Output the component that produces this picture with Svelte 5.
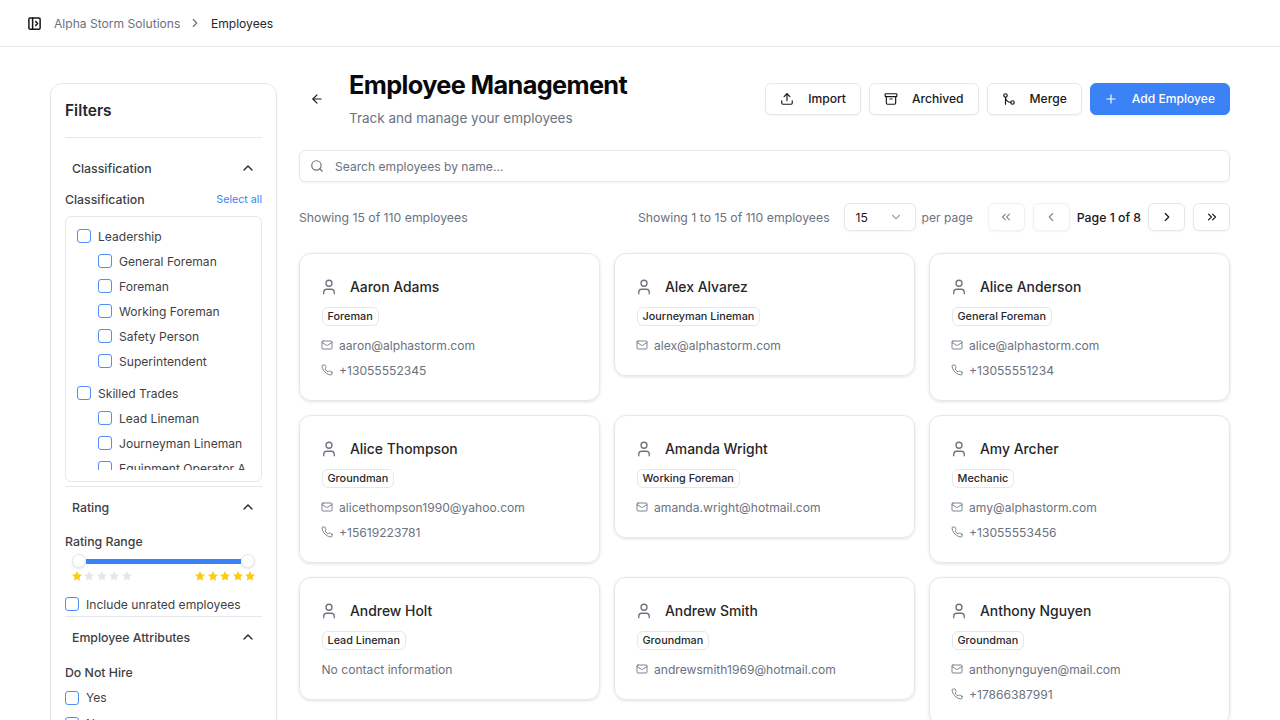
<script>
  const icons = {
    panel: '<rect width="18" height="18" x="3" y="3" rx="2"/><path d="M9 3v18"/><path d="m14 9 3 3-3 3"/>',
    chevronRight: '<path d="m9 18 6-6-6-6"/>',
    chevronLeft: '<path d="m15 18-6-6 6-6"/>',
    chevronUp: '<path d="m18 15-6-6-6 6"/>',
    chevronDown: '<path d="m6 9 6 6 6-6"/>',
    first: '<path d="m11 17-5-5 5-5"/><path d="m18 17-5-5 5-5"/>',
    last: '<path d="m6 17 5-5-5-5"/><path d="m13 17 5-5-5-5"/>',
    back: '<path d="m12 19-7-7 7-7"/><path d="M19 12H5"/>',
    upload: '<path d="M21 15v4a2 2 0 0 1-2 2H5a2 2 0 0 1-2-2v-4"/><path d="m17 8-5-5-5 5"/><path d="M12 3v12"/>',
    archive: '<rect width="20" height="5" x="2" y="3" rx="1"/><path d="M4 8v11a2 2 0 0 0 2 2h12a2 2 0 0 0 2-2V8"/><path d="M10 12h4"/>',
    merge: '<circle cx="18" cy="18" r="3"/><circle cx="6" cy="6" r="3"/><path d="M6 21V9a9 9 0 0 0 9 9"/>',
    plus: '<path d="M5 12h14"/><path d="M12 5v14"/>',
    search: '<circle cx="11" cy="11" r="8"/><path d="m21 21-4.3-4.3"/>',
    user: '<path d="M19 21v-2a4 4 0 0 0-4-4H9a4 4 0 0 0-4 4v2"/><circle cx="12" cy="7" r="4"/>',
    mail: '<rect width="20" height="16" x="2" y="4" rx="2"/><path d="m22 7-8.97 5.7a1.94 1.94 0 0 1-2.06 0L2 7"/>',
    phone: '<path d="M22 16.92v3a2 2 0 0 1-2.18 2 19.79 19.79 0 0 1-8.63-3.07 19.5 19.5 0 0 1-6-6 19.79 19.79 0 0 1-3.07-8.67A2 2 0 0 1 4.11 2h3a2 2 0 0 1 2 1.72 12.84 12.84 0 0 0 .7 2.81 2 2 0 0 1-.45 2.11L8.09 9.91a16 16 0 0 0 6 6l1.27-1.27a2 2 0 0 1 2.11-.45 12.84 12.84 0 0 0 2.81.7A2 2 0 0 1 22 16.92z"/>'
  };

  const groups = [
    { name: 'Leadership', items: ['General Foreman', 'Foreman', 'Working Foreman', 'Safety Person', 'Superintendent'] },
    { name: 'Skilled Trades', items: ['Lead Lineman', 'Journeyman Lineman', 'Equipment Operator A'] }
  ];

  const employees = [
    { name: 'Aaron Adams', role: 'Foreman', email: 'aaron@alphastorm.com', phone: '+13055552345' },
    { name: 'Alex Alvarez', role: 'Journeyman Lineman', email: 'alex@alphastorm.com' },
    { name: 'Alice Anderson', role: 'General Foreman', email: 'alice@alphastorm.com', phone: '+13055551234' },
    { name: 'Alice Thompson', role: 'Groundman', email: 'alicethompson1990@yahoo.com', phone: '+15619223781' },
    { name: 'Amanda Wright', role: 'Working Foreman', email: 'amanda.wright@hotmail.com' },
    { name: 'Amy Archer', role: 'Mechanic', email: 'amy@alphastorm.com', phone: '+13055553456' },
    { name: 'Andrew Holt', role: 'Lead Lineman' },
    { name: 'Andrew Smith', role: 'Groundman', email: 'andrewsmith1969@hotmail.com' },
    { name: 'Anthony Nguyen', role: 'Groundman', email: 'anthonynguyen@mail.com', phone: '+17866387991' }
  ];
</script>

{#snippet icon(name, size, cls = '')}
  <svg class={cls} width={size} height={size} viewBox="0 0 24 24" fill="none" stroke="currentColor" stroke-width="2" stroke-linecap="round" stroke-linejoin="round">{@html icons[name]}</svg>
{/snippet}

{#snippet star(on)}
  <svg class:on class="star" width="12" height="12" viewBox="0 0 24 24"><polygon points="12 2 15.09 8.26 22 9.27 17 14.14 18.18 21.02 12 17.77 5.82 21.02 7 14.14 2 9.27 8.91 8.26 12 2" /></svg>
{/snippet}

{#snippet section(title)}
  <div class="section-head">
    <span>{title}</span>
    {@render icon('chevronUp', 16)}
  </div>
{/snippet}

<div class="app">
  <header class="topbar">
    {@render icon('panel', 15, 'panel')}
    <span class="crumb">Alpha Storm Solutions</span>
    {@render icon('chevronRight', 14, 'sep')}
    <span class="crumb current">Employees</span>
  </header>

  <main class="page">
    <aside class="filters">
      <h2>Filters</h2>

      {@render section('Classification')}
      <div class="label-row">
        <span class="label">Classification</span>
        <span class="select-all">Select all</span>
      </div>
      <div class="tree-box">
        <div class="tree">
          {#each groups as group}
            <div class="group">
              <label class="check"><span class="box"></span>{group.name}</label>
              {#each group.items as item}
                <label class="check child"><span class="box"></span>{item}</label>
              {/each}
            </div>
          {/each}
        </div>
      </div>

      <div class="rule"></div>
      {@render section('Rating')}
      <div class="label rating-label">Rating Range</div>
      <div class="slider">
        <span class="thumb"></span>
        <span class="track"></span>
        <span class="thumb"></span>
      </div>
      <div class="stars">
        <div class="star-set">
          {@render star(true)}{@render star(false)}{@render star(false)}{@render star(false)}{@render star(false)}
        </div>
        <div class="star-set">
          {@render star(true)}{@render star(true)}{@render star(true)}{@render star(true)}{@render star(true)}
        </div>
      </div>
      <label class="check unrated"><span class="box"></span>Include unrated employees</label>

      <div class="rule"></div>
      {@render section('Employee Attributes')}
      <div class="label hire-label">Do Not Hire</div>
      <label class="check plain"><span class="box"></span>Yes</label>
      <label class="check plain"><span class="box"></span>No</label>
    </aside>

    <section class="content">
      <div class="title-row">
        <button class="back" aria-label="Back">{@render icon('back', 14)}</button>
        <div class="titles">
          <h1>Employee Management</h1>
          <p>Track and manage your employees</p>
        </div>
        <div class="actions">
          <button class="btn">{@render icon('upload', 14)}Import</button>
          <button class="btn">{@render icon('archive', 14)}Archived</button>
          <button class="btn">{@render icon('merge', 14)}Merge</button>
          <button class="btn primary">{@render icon('plus', 14)}Add Employee</button>
        </div>
      </div>

      <div class="search">
        {@render icon('search', 14)}
        <span>Search employees by name...</span>
      </div>

      <div class="toolbar">
        <span class="muted count">Showing 15 of 110 employees</span>
        <div class="pager">
          <span class="muted count range">Showing 1 to 15 of 110 employees</span>
          <div class="per-select"><span>15</span>{@render icon('chevronDown', 14)}</div>
          <span class="muted per-label">per page</span>
          <button class="page-btn off" aria-label="First page">{@render icon('first', 14)}</button>
          <button class="page-btn off" aria-label="Previous page">{@render icon('chevronLeft', 14)}</button>
          <span class="page-no">Page 1 of 8</span>
          <button class="page-btn" aria-label="Next page">{@render icon('chevronRight', 14)}</button>
          <button class="page-btn" aria-label="Last page">{@render icon('last', 14)}</button>
        </div>
      </div>

      <div class="cards">
        {#each employees as emp}
          <article class="card">
            <div class="name">{@render icon('user', 18)}<span>{emp.name}</span></div>
            <span class="badge">{emp.role}</span>
            {#if emp.email}
              <div class="contact">{@render icon('mail', 12)}{emp.email}</div>
            {/if}
            {#if emp.phone}
              <div class="contact">{@render icon('phone', 12)}{emp.phone}</div>
            {/if}
            {#if !emp.email && !emp.phone}
              <div class="contact none">No contact information</div>
            {/if}
          </article>
        {/each}
      </div>
    </section>
  </main>
</div>

<style>
  :global(body) {
    margin: 0;
    background: #fff;
    color: #27272a;
    font-family: Inter, 'Liberation Sans', Arial, sans-serif;
  }

  .app {
    height: 100vh;
    overflow: hidden;
  }

  .topbar {
    display: flex;
    align-items: center;
    height: 46px;
    padding-left: 27px;
    border-bottom: 1px solid #e5e7eb;
    font-size: 12.1px;
  }

  .topbar :global(.panel) {
    color: #18181b;
    margin-right: 12px;
    stroke-width: 2.4;
  }

  .topbar :global(.sep) {
    color: #6b7280;
    margin: 0 8.5px 0 8px;
  }

  .crumb {
    color: #6b7280;
  }

  .crumb.current {
    color: #27272a;
  }

  .page {
    display: flex;
    align-items: flex-start;
    gap: 22px;
    padding: 36px 50px 0;
  }

  .filters {
    flex: none;
    box-sizing: border-box;
    width: 227px;
    padding: 0 14px 20px;
    border: 1px solid #e5e7eb;
    border-radius: 12px;
    box-shadow: 0 1px 2px rgba(0, 0, 0, 0.05);
    font-size: 12.1px;
  }

  h2 {
    margin: 0;
    padding: 17px 0 16px;
    border-bottom: 1px solid #e5e7eb;
    font-size: 15.5px;
    line-height: 20px;
    font-weight: 600;
  }

  .section-head {
    display: flex;
    justify-content: space-between;
    align-items: center;
    height: 20px;
    padding: 10px 6px 10px 7px;
    font-weight: 450;
    font-size: 12.3px;
    color: #3f3f46;
  }

  .section-head :global(svg) {
    color: #27272a;
  }

  .filters > .section-head:nth-of-type(1) {
    margin-top: 10px;
  }

  .label-row {
    display: flex;
    justify-content: space-between;
    align-items: center;
    height: 16px;
    margin-top: 3px;
    margin-bottom: 9px;
  }

  .label {
    color: #3f3f46;
    font-weight: 450;
    font-size: 12.3px;
  }

  .select-all {
    color: #3b82f6;
    font-size: 10.7px;
  }

  .tree-box {
    box-sizing: border-box;
    height: 266px;
    padding: 6.5px 11px 12px;
    border: 1px solid #e5e7eb;
    border-radius: 6px;
  }

  .tree-box + .rule {
    margin-top: 4px;
  }

  .tree {
    height: 246.5px;
    overflow: hidden;
  }

  .group {
    margin-bottom: 7px;
  }

  .check {
    display: flex;
    align-items: center;
    gap: 7px;
    height: 25px;
    color: #3f3f46;
  }

  .check.child {
    padding-left: 21px;
  }

  .box {
    flex: none;
    box-sizing: border-box;
    width: 14px;
    height: 14px;
    border: 1px solid #4f8ff7;
    border-radius: 3px;
    background: #fff;
  }

  .rule {
    height: 1px;
    background: #e5e7eb;
  }

  .rating-label {
    margin-top: 7px;
    line-height: 16px;
  }

  .slider {
    display: flex;
    align-items: center;
    margin: 3px 7px 0;
    height: 16px;
  }

  .thumb {
    flex: none;
    box-sizing: border-box;
    width: 14px;
    height: 14px;
    border: 1px solid #e5e7eb;
    border-radius: 50%;
    background: #fff;
    box-shadow: 0 1px 2px rgba(0, 0, 0, 0.1);
  }

  .track {
    flex: 1;
    height: 5px;
    background: #3b82f6;
  }

  .stars {
    display: flex;
    justify-content: space-between;
    margin: 1px 6px 0;
  }

  .star-set {
    display: flex;
    gap: 0.4px;
  }

  .star {
    fill: #e5e7eb;
  }

  .star.on {
    fill: #facc15;
  }

  .unrated {
    height: 24px;
    margin-top: 10px;
  }

  .hire-label {
    margin-top: 7.5px;
    line-height: 16px;
    margin-bottom: 4px;
  }

  .plain {
    height: 26px;
  }

  .content {
    flex: 1;
    min-width: 0;
  }

  .title-row {
    display: flex;
    align-items: flex-start;
    height: 67px;
  }

  button {
    font: inherit;
    background: none;
    cursor: pointer;
  }

  .back {
    display: flex;
    align-items: center;
    justify-content: center;
    flex: none;
    width: 36px;
    height: 31px;
    margin-right: 14px;
    padding: 0;
    border: 0;
    color: #18181b;
  }

  .titles {
    flex: 1;
  }

  h1 {
    margin: -14px 0 0;
    font-size: 25.3px;
    line-height: 32px;
    font-weight: 700;
    letter-spacing: -0.025em;
    color: #09090b;
  }

  .titles p {
    margin: 7px 0 0;
    font-size: 13.5px;
    line-height: 20px;
    color: #6b7280;
  }

  .actions {
    display: flex;
    gap: 8px;
  }

  .btn {
    display: flex;
    align-items: center;
    gap: 14px;
    height: 31.5px;
    box-sizing: border-box;
    padding: 0 14px;
    border: 1px solid #e5e7eb;
    border-radius: 6px;
    background: #fff;
    box-shadow: 0 1px 2px rgba(0, 0, 0, 0.05);
    font-size: 12.1px;
    font-weight: 500;
    color: #18181b;
  }

  .btn.primary {
    padding-left: 13px;
    background: #3b82f6;
    border-color: #3b82f6;
    color: #fff;
  }

  .search {
    display: flex;
    align-items: center;
    gap: 11px;
    box-sizing: border-box;
    height: 32px;
    padding: 0 10px;
    border: 1px solid #e5e7eb;
    border-radius: 6px;
    box-shadow: 0 1px 2px rgba(0, 0, 0, 0.05);
    font-size: 12.1px;
    color: #6b7280;
  }

  .toolbar {
    display: flex;
    justify-content: space-between;
    align-items: center;
    height: 28px;
    margin-top: 21px;
    font-size: 12.1px;
  }

  .muted {
    color: #6b7280;
  }

  .count {
    font-size: 12.25px;
  }

  .pager {
    display: flex;
    align-items: center;
  }

  .range {
    margin-right: 14px;
  }

  .per-select {
    display: flex;
    align-items: center;
    justify-content: space-between;
    box-sizing: border-box;
    width: 72px;
    height: 28px;
    margin-right: 6px;
    padding: 0 12px 0 11px;
    border: 1px solid #e5e7eb;
    border-radius: 6px;
    box-shadow: 0 1px 2px rgba(0, 0, 0, 0.05);
    color: #18181b;
  }

  .per-select :global(svg) {
    color: #a1a1aa;
  }

  .per-label {
    margin-right: 15px;
  }

  .page-btn {
    display: flex;
    align-items: center;
    justify-content: center;
    box-sizing: border-box;
    width: 37px;
    height: 28px;
    padding: 0;
    border: 1px solid #e5e7eb;
    border-radius: 6px;
    box-shadow: 0 1px 2px rgba(0, 0, 0, 0.05);
    color: #18181b;
  }

  .page-btn + .page-btn {
    margin-left: 8px;
  }

  .page-btn.off {
    color: #8b8b93;
    border-color: #f0f0f2;
  }

  .page-no {
    margin: 0 7px;
    color: #18181b;
    font-weight: 500;
    font-size: 12.25px;
  }

  .cards {
    display: grid;
    grid-template-columns: repeat(3, 1fr);
    gap: 14px;
    align-items: start;
    margin-top: 22px;
  }

  .card {
    box-sizing: border-box;
    padding: 20.5px 22px 17.5px 21.5px;
    border: 1px solid #e5e7eb;
    border-radius: 12px;
    box-shadow: 0 1px 3px rgba(0, 0, 0, 0.12);
  }

  .name {
    display: flex;
    align-items: center;
    gap: 12px;
    height: 24px;
    margin-left: -1.5px;
    font-size: 13.9px;
    font-weight: 500;
    color: #27272a;
  }

  .name :global(svg) {
    color: #6b7280;
    stroke-width: 1.75;
  }

  .badge {
    display: inline-block;
    margin-top: 8.5px;
    padding: 0 5px;
    border: 1px solid #e5e7eb;
    border-radius: 6px;
    font-size: 10.85px;
    line-height: 17px;
    font-weight: 500;
    color: #27272a;
  }

  .contact {
    display: flex;
    align-items: center;
    gap: 6.5px;
    height: 25px;
    margin-left: -1px;
    font-size: 12.1px;
    color: #6b7280;
  }

  .contact.none {
    margin-left: 0;
  }

  .contact :global(svg) {
    stroke-width: 1.75;
  }

  .badge + .contact {
    margin-top: 6.5px;
  }
</style>
